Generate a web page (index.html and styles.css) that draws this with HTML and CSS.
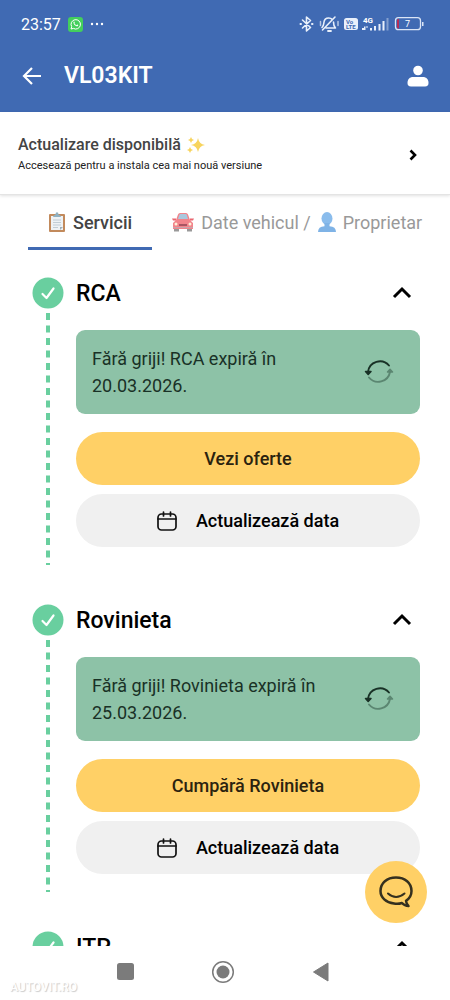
FILE: index.html
```html
<!DOCTYPE html>
<html lang="ro">
<head>
<meta charset="utf-8">
<meta name="viewport" content="width=device-width, initial-scale=1">
<title>VL03KIT</title>
<link rel="stylesheet" href="styles.css">
</head>
<body>
<svg class="defs" width="0" height="0" aria-hidden="true">
  <symbol id="check" viewBox="0 0 32 32"><circle cx="16" cy="16" r="15.500" fill="#69cf9f"/><path d="M10.500 17l4 4 7-9.500" fill="none" stroke="#fff" stroke-width="2.200" stroke-linecap="round" stroke-linejoin="round"/></symbol>
  <symbol id="up" viewBox="0 0 20 20"><path d="M2 14l8-8 8 8" fill="none" stroke="#000" stroke-width="3"/></symbol>
  <symbol id="refresh" viewBox="0 0 30 30"><g fill="none" stroke-width="1.900" stroke-linecap="round" stroke-linejoin="round"><path d="M25 8.500A12 12 0 0 0 4 15" stroke="#193126"/><path d="M5 20.500A12 12 0 0 0 26 15" stroke="#5b8671"/></g><path d="M1.500 14.500h5.500L4.200 17.500z" fill="#193126" stroke="#193126" stroke-width="1.500" stroke-linejoin="round"/><path d="M23.500 15h5L26 12.300z" fill="#5b8671" stroke="#5b8671" stroke-width="1.500" stroke-linejoin="round"/></symbol>
  <symbol id="calendar" viewBox="0 0 20 20"><g fill="none" stroke="#111" stroke-width="1.700" stroke-linecap="round"><rect x="1" y="3" width="18" height="16" rx="3.500"/><path d="M1 8h18M6.500 1v4M13.500 1v4"/></g></symbol>
</svg>
<div class="app">
  <header class="header">
    <div class="status">
      <span class="time">23:57</span>
      <svg width="15" height="15" viewBox="0 0 15 15" aria-hidden="true"><rect width="15" height="15" rx="3" fill="#43cf5c"/><path d="M3 12l.7-2.300A4.700 4.700 0 1 1 5.400 11.400z" fill="none" stroke="#fff" stroke-width="1"/><path d="M5.500 5c.5-.8 1-.6 1.300.5l-.4.7c.5 1 1.200 1.600 2.100 2l.7-.7c1.200.4 1.300.8.6 1.500C8.500 10 5 7.500 5.500 5z" fill="#fff"/></svg>
      <svg width="14" height="4" viewBox="0 0 14 4" fill="#fff" aria-hidden="true"><circle cx="2" cy="2" r="1.200"/><circle cx="7" cy="2" r="1.200"/><circle cx="12" cy="2" r="1.200"/></svg>
      <span class="spacer"></span>
      <svg width="125" height="20" viewBox="299 14 125 20" aria-hidden="true">
        <g fill="none" stroke="#e9f0fb" stroke-width="1.600" stroke-linecap="round" stroke-linejoin="round">
          <path d="M302.500 20l8 7.500-4 3.500V17l4 3.500-8 7.500"/><path d="M300.500 24h.5M312 24h.5" stroke-width="2"/>
          <path d="M322 27.500c1.700-1.500 1.700-3 1.900-5 .3-3 2-4.500 4.800-4.500 1.500 0 2.600.5 3.300 1.300M326 28h9.500c-1.700-1.500-2-3.500-2-6M322.500 30L335 17"/><path d="M328 31h3" stroke-width="1.800"/><path d="M320.500 21.500v4M338 21.500v4" stroke-width="1.500" opacity=".7"/>
        </g>
        <rect x="344" y="18" width="14" height="12" rx="2.500" fill="#e9f0fb"/>
        <g class="tiny"><text class="volte" x="346" y="24">Vo</text><text class="volte" x="346" y="29">LTE</text><text class="net" x="363" y="23">4G</text></g>
        <g fill="#e9f0fb"><path d="M362 28h2v2h-2zM364 26.500h1.500v3.500H364zM366.500 26h1v2h-1zM370 28h2v2.500h-2zM374 26h2v4.500h-2zM378.500 24h2v6.500h-2zM382.500 21h2v9.500h-2z"/><path d="M386.500 18h2v12.500h-2z" opacity=".4"/></g>
        <rect x="395.500" y="17.700" width="25" height="12" rx="3" fill="none" stroke="#dbe5f6" stroke-width="1.300"/><path d="M422 22h1.500v4H422z" fill="#dbe5f6"/><path d="M397 20q0-1 2-1v9.500q-2 0-2-1z" fill="#b42d58"/><text class="charge" x="405" y="27">7</text>
      </svg>
    </div>
    <div class="titlebar">
      <button class="plain" aria-label="Înapoi"><svg width="20" height="20" viewBox="0 0 20 20"><path d="M19 10H2M10 2l-8 8 8 8" fill="none" stroke="#fff" stroke-width="2.200"/></svg></button>
      <h1 class="title">VL03KIT</h1>
      <button class="plain" aria-label="Profil"><svg width="22" height="22" viewBox="0 0 22 22" fill="#fff"><circle cx="11" cy="5.500" r="4.800"/><path d="M.5 18c0-4 2.500-6 5.500-6h10c3 0 5.500 2 5.500 6 0 2-1 3.500-3.500 3.500H4C1.500 21.500.5 20 .5 18z"/></svg></button>
    </div>
  </header>

  <button class="update">
    <span class="update-body">
      <span class="update-title">Actualizare disponibilă <svg width="18" height="18" viewBox="0 0 18 18" fill="#f7d45e" aria-hidden="true"><path d="M11 2q1 6 7 7-6 1-7 7-1-6-7-7 6-1 7-7zM4 1q.5 2.500 3 3-2.500.5-3 3-.5-2.500-3-3 2.500-.5 3-3zM3 11q.5 2.500 3 3-2.500.5-3 3-.5-2.500-3-3 2.500-.5 3-3z"/></svg></span>
      <span class="update-text">Accesează pentru a instala cea mai nouă versiune</span>
    </span>
    <svg width="8" height="12" viewBox="0 0 8 12" aria-hidden="true"><path d="M1.500 1.500L6 6l-4.500 4.500" fill="none" stroke="#000" stroke-width="2.600"/></svg>
  </button>

  <nav class="tabs">
    <button class="tab tab-active"><svg width="18" height="20" viewBox="0 0 18 20" aria-hidden="true"><rect x="1" y="2" width="16" height="18" rx="1" fill="#c28a5c"/><path d="M3 4h12v14H3z" fill="#eef2f5"/><path d="M5 5q0-2 2.500-2.500Q7.500.3 9 .3t1.500 2.200Q13 3 13 5z" fill="#8fb1c2"/><path d="M5 8h8M5 10.500h8M5 13h8M5 15.500h5" stroke="#b5c3cd" stroke-width=".8"/><path d="M12 18v-3h3z" fill="#9fb0bc"/></svg>Servicii</button>
    <button class="tab"><svg width="22" height="20" viewBox="0 0 22 20" aria-hidden="true"><path d="M2 14h5v5.500H2zM15 14h5v5.500h-5z" fill="#999"/><path d="M4 8l2-5.500Q6.500 1 8 1h6q1.500 0 2 1.500L18 8l3 3v6H1v-6z" fill="#f2848b"/><path d="M6 7l1.300-4q.3-1 1.300-1h5q1 0 1.300 1L16 7z" fill="#a9c8de"/><path d="M0 6.500h4v2H1zM22 6.500h-4v2h3z" fill="#e96770"/><path d="M7 12h8v2H7z" fill="#a95562"/><circle cx="4" cy="12" r="1.500" fill="#fff0d9"/><circle cx="18" cy="12" r="1.500" fill="#fff0d9"/><path d="M1 15.500h20" stroke="#c4a6ad"/></svg><span class="tab-label">Date vehicul / <svg width="18" height="20" viewBox="0 0 18 20" aria-hidden="true"><ellipse cx="9" cy="6.500" rx="5.500" ry="6.500" fill="#8abcec"/><path d="M6.500 11h5v3.200Q18 14.500 18 20H0q0-5.500 6.500-5.800z" fill="#7fb3e6"/></svg> Proprietar</span></button>
  </nav>

  <main class="services">
    <section class="service">
      <div class="rail"><svg class="badge"><use href="#check"/></svg><svg class="dots"><line x1="2" y1="0" x2="2" y2="100%" stroke="#69cf9f" stroke-width="4" stroke-dasharray="7 5.500"/></svg></div>
      <div class="content">
        <div class="heading"><h2>RCA</h2><button class="plain" aria-label="Restrânge RCA"><svg width="20" height="20"><use href="#up"/></svg></button></div>
        <div class="notice"><p>Fără griji! RCA expiră în 20.03.2026.</p><svg class="refresh"><use href="#refresh"/></svg></div>
        <div class="actions"><button class="pill primary">Vezi oferte</button><button class="pill"><svg width="20" height="20"><use href="#calendar"/></svg>Actualizează data</button></div>
      </div>
    </section>
    <section class="service">
      <div class="rail"><svg class="badge"><use href="#check"/></svg><svg class="dots"><line x1="2" y1="0" x2="2" y2="100%" stroke="#69cf9f" stroke-width="4" stroke-dasharray="7 5.500"/></svg></div>
      <div class="content">
        <div class="heading"><h2>Rovinieta</h2><button class="plain" aria-label="Restrânge Rovinieta"><svg width="20" height="20"><use href="#up"/></svg></button></div>
        <div class="notice"><p>Fără griji! Rovinieta expiră în 25.03.2026.</p><svg class="refresh"><use href="#refresh"/></svg></div>
        <div class="actions"><button class="pill primary">Cumpără Rovinieta</button><button class="pill"><svg width="20" height="20"><use href="#calendar"/></svg>Actualizează data</button></div>
      </div>
    </section>
    <section class="service">
      <div class="rail"><svg class="badge"><use href="#check"/></svg></div>
      <div class="content">
        <div class="heading"><h2>ITP</h2><button class="plain" aria-label="Restrânge ITP"><svg width="20" height="20"><use href="#up"/></svg></button></div>
      </div>
    </section>
  </main>

  <footer class="system">
    <button class="plain" aria-label="Aplicații recente"><svg width="17" height="17"><rect width="17" height="17" rx="2.500" fill="#7b7b7b"/></svg></button>
    <button class="plain" aria-label="Acasă"><svg width="24" height="24" viewBox="0 0 24 24"><circle cx="12" cy="12" r="10.300" fill="none" stroke="#7b7b7b" stroke-width="1.500"/><circle cx="12" cy="12" r="6.500" fill="#7b7b7b"/></svg></button>
    <button class="plain" aria-label="Înapoi"><svg width="16" height="20" viewBox="0 0 16 20"><path d="M15 1v18L.5 10z" fill="#7b7b7b" stroke="#7b7b7b" stroke-linejoin="round"/></svg></button>
    <span class="watermark">AUTOVIT.RO</span>
  </footer>
  <button class="chat" aria-label="Chat"><svg width="34" height="32" viewBox="0 0 34 32" fill="none" stroke="#35301f" stroke-linecap="round" stroke-linejoin="round"><path d="M23 27Q19 28.300 15 27.500C7 26.500 1.500 21.500 1.500 15 1.500 7 8 1.500 17 1.500S32.500 7 32.500 15c0 4-2 7.500-5.500 9.800 0 2 1 3.500 2.500 5.200-2.500 0-4.500-.8-6.500-3z" stroke-width="2.500"/><path d="M9 17.500q8 7 16.500 0" stroke-width="2"/></svg></button>
</div>
</body>
</html>
```
FILE: styles.css
```css
* { box-sizing: border-box; }
body { margin: 0; background: #fff; color: #000; font-family: Roboto, "Noto Sans", sans-serif; }
button { font: inherit; color: inherit; border: 0; padding: 0; background: none; cursor: pointer; }
h1, h2, p { margin: 0; }
svg { display: block; flex: none; }
.defs { position: absolute; }
.plain { display: flex; }
.app { position: relative; display: flex; flex-direction: column; height: 100vh; overflow: hidden; }

.header { flex: none; background: #406ab3; color: #fff; padding: 14px 21px 18px; }
.status { display: flex; align-items: center; height: 20px; gap: 7px; margin-right: 5px; }
.time { font-size: 16px; }
.spacer { flex: 1; }
.tiny { font-weight: 700; }
.volte { font-size: 6px; fill: #406ab3; }
.net { font-size: 8px; fill: #fff; }
.charge { font-size: 9px; fill: #fff; }
.titlebar { display: flex; align-items: center; height: 36px; margin-top: 24px; padding-left: 1px; }
.title { flex: 1; margin-left: 22px; font-size: 23px; line-height: 36px; font-weight: 600; }

.update { flex: none; display: flex; align-items: center; justify-content: space-between; padding: 21px 33px 18px 18px; text-align: left; border-bottom: 1px solid #e4e4e4; box-shadow: 0 1px 3px #0000001f; }
.update-body { display: grid; }
.update-title { display: flex; align-items: center; gap: 6px; font-size: 16px; line-height: 23px; font-weight: 500; color: #444; }
.update-text { font-size: 11px; line-height: 20px; color: #222; }

.tabs { flex: none; display: flex; padding: 0 28px; white-space: nowrap; }
.tab { display: flex; align-items: center; gap: 7px; height: 55px; padding: 2px 20px 0; font-size: 18px; color: #999; border-bottom: 3px solid transparent; }
.tab-active { font-weight: 500; color: #444; border-color: #406ab3; }
.tab-label { display: flex; gap: 7px; }

.services { flex: 1; min-height: 0; overflow: hidden; padding: 27px 30px 0 32px; }
.service { display: flex; gap: 12px; padding-bottom: 57px; }
.rail { display: flex; flex-direction: column; align-items: center; gap: 4px; width: 32px; }
.badge { width: 32px; height: 32px; }
.dots { flex: 1; width: 4px; height: 0; margin-bottom: -18px; }
.content { flex: 1; min-width: 0; }
.heading { display: flex; align-items: center; justify-content: space-between; height: 32px; padding-right: 8px; }
h2 { font-size: 23px; font-weight: 500; }
.notice { display: flex; align-items: center; justify-content: space-between; margin-top: 21px; padding: 15px 26px 15px 16px; background: #8dc2a7; border-radius: 9px; }
.notice p { max-width: 240px; font-size: 18px; line-height: 27px; color: #193126; }
.refresh { width: 30px; height: 30px; }
.actions { display: grid; gap: 9px; margin-top: 18px; }
.pill { display: flex; align-items: center; justify-content: center; gap: 19px; height: 53px; border-radius: 27px; background: #f0f0f0; font-size: 18px; font-weight: 500; }
.primary { background: #ffd066; color: #2b230f; }

.system { position: relative; flex: none; display: flex; align-items: center; justify-content: space-between; height: 54px; padding: 0 27% 3px 26%; }
.watermark { position: absolute; left: 10px; bottom: 6px; font-size: 12px; font-weight: 500; color: #fff; text-shadow: 1px 1px 1px #ccc; }
.chat { position: absolute; right: 23px; bottom: 77px; display: flex; align-items: center; justify-content: center; width: 62px; height: 62px; border-radius: 50%; background: #ffd066; }
```
